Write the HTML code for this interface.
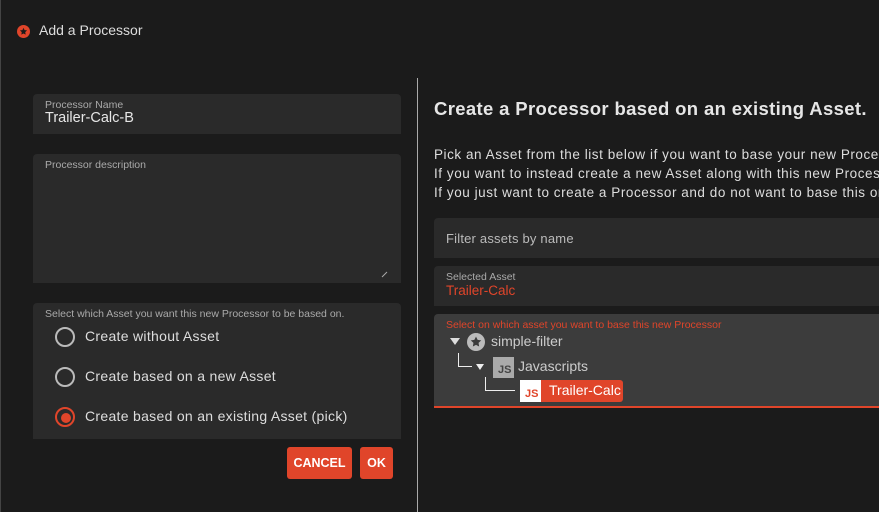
<!DOCTYPE html>
<html><head><meta charset="utf-8"><style>
*{margin:0;padding:0;box-sizing:border-box}
html,body{width:879px;height:512px;overflow:hidden}
body{background:#1b1b1b;font-family:"Liberation Sans",sans-serif;color:#ddd;position:relative}
#w{position:absolute;left:0;top:0;width:879px;height:512px;overflow:hidden}
.a{position:absolute;white-space:nowrap}
.f{position:absolute;background:#2a2a2a;border-radius:4px 4px 0 0}
.lbl{font-size:10.5px;color:#aaa}
.radio{position:absolute;width:20px;height:20px;border:2px solid #bbb;border-radius:50%}
.opt{font-size:14px;letter-spacing:0.3px}
.btn{position:absolute;background:#e0452a;color:#fff;font-size:12.5px;font-weight:bold;border-radius:3px;text-align:center;line-height:32px}
</style></head><body><div id="w">
<div class="a" style="left:0;top:0;width:1px;height:512px;background:#444"></div>
<svg class="a" style="left:17px;top:25px" width="13" height="13" viewBox="0 0 12 12"><circle cx="6" cy="6" r="6" fill="#e0452a"/><path d="M6 2.6l1 2.1 2.3.3-1.7 1.6.4 2.3L6 7.8 4 8.9l.4-2.3L2.7 5l2.3-.3z" fill="#1b1b1b"/></svg>
<div class="a" style="left:39px;top:22px;font-size:14px;color:#ddd">Add a Processor</div>
<div class="a" style="left:417px;top:78px;width:1px;height:434px;background:#aaa"></div>

<div class="f" style="left:33px;top:94px;width:368px;height:40px"></div>
<div class="a lbl" style="left:45px;top:99px">Processor Name</div>
<div class="a" style="left:45px;top:110px;font-size:14.5px;color:#e6e6e6">Trailer-Calc-B</div>

<div class="f" style="left:33px;top:154px;width:368px;height:129px"></div>
<div class="a lbl" style="left:45px;top:159px">Processor description</div>
<div class="a" style="left:381px;top:274px;width:7px;height:1px;background:#aaa;transform:rotate(-45deg)"></div>

<div class="f" style="left:33px;top:303px;width:368px;height:136px"></div>
<div class="a lbl" style="left:45px;top:308px">Select which Asset you want this new Processor to be based on.</div>
<div class="radio" style="left:55px;top:327px"></div>
<div class="a opt" style="left:85px;top:328px">Create without Asset</div>
<div class="radio" style="left:55px;top:367px"></div>
<div class="a opt" style="left:85px;top:368px">Create based on a new Asset</div>
<div class="radio" style="left:55px;top:407px;border-color:#e0452a"></div>
<div class="a" style="left:61px;top:413px;width:10px;height:10px;border-radius:50%;background:#e0452a"></div>
<div class="a opt" style="left:85px;top:408px">Create based on an existing Asset (pick)</div>
<div class="btn" style="left:287px;top:447px;width:65px">CANCEL</div>
<div class="btn" style="left:360px;top:447px;width:33px">OK</div>

<div class="a" style="left:434px;top:98px;font-size:18.5px;font-weight:bold;color:#e6e6e6;letter-spacing:0.35px">Create a Processor based on an existing Asset.</div>
<div class="a" style="left:434px;top:145px;font-size:13.5px;line-height:19px;color:#ddd;letter-spacing:0.55px">Pick an Asset from the list below if you want to base your new Processor on it.<br>If you want to instead create a new Asset along with this new Processor, pick the other option.<br>If you just want to create a Processor and do not want to base this on an Asset, pick the first option.</div>

<div class="f" style="left:434px;top:218px;width:460px;height:40px"></div>
<div class="a" style="left:446px;top:231px;font-size:13px;color:#bbb;letter-spacing:0.2px">Filter assets by name</div>

<div class="f" style="left:434px;top:266px;width:460px;height:40px"></div>
<div class="a lbl" style="left:446px;top:271px">Selected Asset</div>
<div class="a" style="left:446px;top:283px;font-size:13.5px;color:#e0452a">Trailer-Calc</div>

<div class="f" style="left:434px;top:314px;width:460px;height:92px;background:#3c3c3c"></div>
<div class="a" style="left:434px;top:406px;width:460px;height:2px;background:#e0452a"></div>
<div class="a" style="left:446px;top:319px;font-size:10.5px;color:#e0452a">Select on which asset you want to base this new Processor</div>
<div class="a" style="left:450px;top:338px;width:0;height:0;border-left:5px solid transparent;border-right:5px solid transparent;border-top:7px solid #ddd"></div>
<svg class="a" style="left:467px;top:333px" width="18" height="18" viewBox="0 0 12 12"><circle cx="6" cy="6" r="6" fill="#bbb"/><path d="M6 2.4l1.1 2.2 2.4.3-1.8 1.7.4 2.4L6 7.9 3.9 9l.4-2.4L2.5 4.9l2.4-.3z" fill="#3c3c3c"/></svg>
<div class="a" style="left:491px;top:333px;font-size:14px;color:#ccc">simple-filter</div>
<div class="a" style="left:458px;top:353px;width:1px;height:14px;background:#eee"></div>
<div class="a" style="left:458px;top:366px;width:14px;height:1px;background:#eee"></div>
<div class="a" style="left:476px;top:364px;width:0;height:0;border-left:4px solid transparent;border-right:4px solid transparent;border-top:6px solid #eee"></div>
<div class="a" style="left:493px;top:357px;width:21px;height:21px;background:#aaa;font-size:11px;font-weight:bold;color:#444;padding:8px 0 0 5px;line-height:11px">JS</div>
<div class="a" style="left:518px;top:358px;font-size:14px;color:#ccc">Javascripts</div>
<div class="a" style="left:485px;top:377px;width:1px;height:14px;background:#eee"></div>
<div class="a" style="left:485px;top:390px;width:30px;height:1px;background:#eee"></div>
<div class="a" style="left:520px;top:380px;width:103px;height:22px;background:#e0452a;border-radius:3px"></div>
<div class="a" style="left:520px;top:380px;width:21px;height:22px;background:#fff;font-size:11px;font-weight:bold;color:#e0452a;padding:9px 0 0 5px;line-height:11px">JS</div>
<div class="a" style="left:549px;top:382px;font-size:14px;color:#fff">Trailer-Calc</div>
</div></body></html>
